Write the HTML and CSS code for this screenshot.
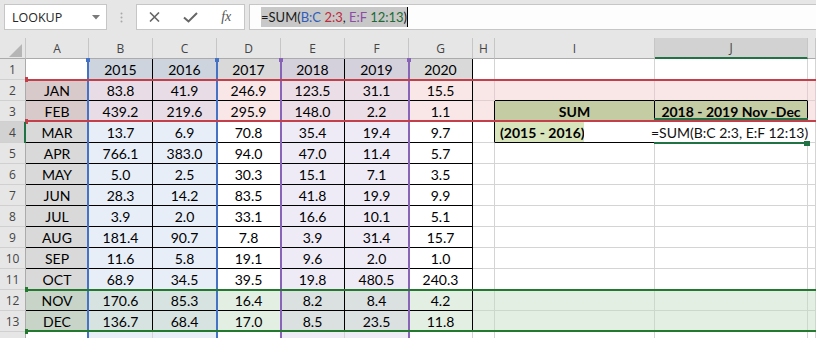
FILE: index.html
```html
<!DOCTYPE html>
<html>
<head>
<meta charset="utf-8">
<link rel="stylesheet" href="styles.css">
</head>
<body>
<div class="fbar">
  <div class="namebox"><span class="nb-text">LOOKUP</span><svg class="nb-caret" width="8" height="5" viewBox="0 0 8 5"><path d="M0 0H8L4 4.5Z" fill="#7a7a7a"/></svg></div>
  <div class="dots"><svg width="3" height="11" viewBox="0 0 3 11"><circle cx="1.5" cy="1.5" r="1" fill="#a8a8a8"/><circle cx="1.5" cy="5.5" r="1" fill="#a8a8a8"/><circle cx="1.5" cy="9.5" r="1" fill="#a8a8a8"/></svg></div>
  <div class="fbtns">
    <span class="fbtn"><svg width="11" height="10" viewBox="0 0 11 10"><path d="M1 0.5L10 9.5M10 0.5L1 9.5" stroke="#666" stroke-width="1.6" fill="none"/></svg></span>
    <span class="fbtn"><svg width="15" height="11" viewBox="0 0 15 11"><path d="M1 5.5L5.5 9.5L14 1" fill="none" stroke="#666" stroke-width="2"/></svg></span>
    <span class="fbtn fx">fx</span>
  </div>
  <div class="finput"><span class="fsel">=SUM(<span class="rb">B:C</span> <span class="rr">2:3</span>, <span class="rp">E:F</span> <span class="rg">12:13</span>)</span><span class="caret"></span></div>
</div>

<div class="sheet">
  <div class="hrow">
    <div class="corner"><svg width="25" height="20" viewBox="0 0 25 20"><path d="M22 6V19H9Z" fill="#b5b5b5"/></svg></div>
    <div>A</div><div>B</div><div>C</div><div>D</div><div>E</div><div>F</div><div>G</div><div>H</div><div>I</div><div class="jsel">J</div><div></div>
  </div>

  <div class="row r1"><div class="rh">1</div><div></div><div class="t bc">2015</div><div class="t bc">2016</div><div class="t gy">2017</div><div class="t ef">2018</div><div class="t ef">2019</div><div class="t gy">2020</div><div></div><div></div><div></div><div></div></div>

  <div class="row pink"><div class="rh">2</div><div class="t a">JAN</div><div class="t bc">83.8</div><div class="t bc">41.9</div><div class="t">246.9</div><div class="t ef">123.5</div><div class="t ef">31.1</div><div class="t">15.5</div><div></div><div class="bb"></div><div class="bb"></div><div></div></div>

  <div class="row pink"><div class="rh">3</div><div class="t a">FEB</div><div class="t bc">439.2</div><div class="t bc">219.6</div><div class="t">295.9</div><div class="t ef">148.0</div><div class="t ef">2.2</div><div class="t">1.1</div><div class="br"></div><div class="t olv b">SUM</div><div class="t olv b">2018 - 2019 Nov -Dec</div><div></div></div>

  <div class="row"><div class="rh sel">4</div><div class="t a">MAR</div><div class="t bc">13.7</div><div class="t bc">6.9</div><div class="t">70.8</div><div class="t ef">35.4</div><div class="t ef">19.4</div><div class="t">9.7</div><div class="br"></div><div class="lg bb">(2015 - 2016)</div><div></div><div></div></div>

  <div class="row"><div class="rh">5</div><div class="t a">APR</div><div class="t bc">766.1</div><div class="t bc">383.0</div><div class="t">94.0</div><div class="t ef">47.0</div><div class="t ef">11.4</div><div class="t">5.7</div><div></div><div></div><div></div><div></div></div>

  <div class="row"><div class="rh">6</div><div class="t a">MAY</div><div class="t bc">5.0</div><div class="t bc">2.5</div><div class="t">30.3</div><div class="t ef">15.1</div><div class="t ef">7.1</div><div class="t">3.5</div><div></div><div></div><div></div><div></div></div>

  <div class="row"><div class="rh">7</div><div class="t a">JUN</div><div class="t bc">28.3</div><div class="t bc">14.2</div><div class="t">83.5</div><div class="t ef">41.8</div><div class="t ef">19.9</div><div class="t">9.9</div><div></div><div></div><div></div><div></div></div>

  <div class="row"><div class="rh">8</div><div class="t a">JUL</div><div class="t bc">3.9</div><div class="t bc">2.0</div><div class="t">33.1</div><div class="t ef">16.6</div><div class="t ef">10.1</div><div class="t">5.1</div><div></div><div></div><div></div><div></div></div>

  <div class="row"><div class="rh">9</div><div class="t a">AUG</div><div class="t bc">181.4</div><div class="t bc">90.7</div><div class="t">7.8</div><div class="t ef">3.9</div><div class="t ef">31.4</div><div class="t">15.7</div><div></div><div></div><div></div><div></div></div>

  <div class="row"><div class="rh">10</div><div class="t a">SEP</div><div class="t bc">11.6</div><div class="t bc">5.8</div><div class="t">19.1</div><div class="t ef">9.6</div><div class="t ef">2.0</div><div class="t">1.0</div><div></div><div></div><div></div><div></div></div>

  <div class="row"><div class="rh">11</div><div class="t a">OCT</div><div class="t bc">68.9</div><div class="t bc">34.5</div><div class="t">39.5</div><div class="t ef">19.8</div><div class="t ef">480.5</div><div class="t">240.3</div><div></div><div></div><div></div><div></div></div>

  <div class="row green"><div class="rh">12</div><div class="t a">NOV</div><div class="t bc">170.6</div><div class="t bc">85.3</div><div class="t">16.4</div><div class="t ef">8.2</div><div class="t ef">8.4</div><div class="t">4.2</div><div></div><div></div><div></div><div></div></div>

  <div class="row green"><div class="rh">13</div><div class="t a">DEC</div><div class="t bc">136.7</div><div class="t bc">68.4</div><div class="t">17.0</div><div class="t ef">8.5</div><div class="t ef">23.5</div><div class="t">11.8</div><div></div><div></div><div></div><div></div></div>

  <div class="row"><div class="rh"></div><div></div><div class="bc"></div><div class="bc"></div><div></div><div class="ef"></div><div class="ef"></div><div></div><div></div><div></div><div></div><div></div></div>

  <div class="ov vb vb1"></div>
  <div class="ov vb vb2"></div>
  <div class="ov vp vp1"></div>
  <div class="ov vp vp2"></div>
  <div class="ov hdl hb1"></div>
  <div class="ov hdl hb2"></div>
  <div class="ov hdl hp1"></div>
  <div class="ov hdl hp2"></div>

  <div class="ov hr hr1"></div>
  <div class="ov hr hr2"></div>
  <div class="ov hg hg1"></div>
  <div class="ov hg hg2"></div>
  <div class="ov hdv hr1h"></div>
  <div class="ov hdv hr2h"></div>
  <div class="ov hdv hg1h"></div>
  <div class="ov hdv hg2h"></div>

  <div class="ov rsel"></div>
  <div class="ov edit">=SUM(B:C 2:3, E:F 12:13)</div>
  <div class="ov act actT"></div>
  <div class="ov act actB"></div>
  <div class="ov acth"></div>
</div>
</body>
</html>
```

FILE: styles.css
```css
* { box-sizing: border-box; margin: 0; padding: 0; }
html, body { width: 816px; height: 338px; overflow: hidden; }
body { background: #e6e6e6; font-family: Lato, "Liberation Sans", sans-serif; color: #000; }

/* formula bar */
.fbar { height: 38px; display: flex; align-items: flex-start; padding: 4px 0 0 4px; }
.namebox { width: 103px; height: 26px; background: #fff; border: 1px solid #c6c6c6; display: flex; align-items: center; justify-content: space-between; padding: 0 6px 0 7px; }
.nb-text { font-family: "Open Sans", sans-serif; font-size: 12.5px; color: #262626; }
.dots { width: 29px; height: 26px; display: flex; align-items: center; justify-content: center; }
.fbtns { width: 109px; height: 26px; background: #fff; border: 1px solid #c6c6c6; display: flex; }
.fbtn { flex: 1; display: flex; align-items: center; justify-content: center; }
.fx { font-family: "Liberation Serif", serif; font-style: italic; font-size: 14px; color: #555; }
.finput { margin-left: 4px; flex: 1; height: 26px; background: #fdfdfd; border: 1px solid #c6c6c6; border-right: 0; padding-left: 11px; display: flex; align-items: center; }
.fsel { background: #c8c8c8; font-size: 13px; line-height: 20px; height: 20px; color: #1a1a1a; white-space: pre; }
.caret { width: 1px; height: 20px; background: #000; }
.rb { color: #2f5dba; }
.rr { color: #c0283c; }
.rp { color: #8e4ca6; }
.rg { color: #1d6b34; }

/* sheet */
.sheet { position: relative; height: 300px; background: #fff; overflow: hidden; }
.hrow, .row { display: grid; grid-template-columns: 26px 63px 64px 64px 64px 64px 64px 64px 22px 160px 153px 1fr; height: 21px; }
.hrow > div { background: #e6e6e6; border-right: 1px solid #c6c6c6; border-bottom: 1px solid #ababab; display: flex; align-items: center; justify-content: center; font-family: "Open Sans", sans-serif; font-size: 12px; color: #444; }
.hrow > .corner { display: block; }
.corner svg { display: block; }
.hrow > .jsel { background: #d2d2d2; border-bottom: 2px solid #217346; }

.row > div { background: #fff; border-right: 1px solid #d4d4d4; border-bottom: 1px solid #d4d4d4; display: flex; align-items: center; justify-content: center; font-size: 14px; white-space: nowrap; overflow: hidden; padding-top: 1px; }
.row > .rh { background: #e6e6e6; border-right-color: #ababab; border-bottom-color: #d0d0d0; font-family: "Open Sans", sans-serif; font-size: 12px; color: #444; padding-top: 0; }
.row > .rh.sel { background: #d2d2d2; }

.row > .a { background: #d9d9d9; }
.row > .bc { background: #e7eef8; }
.row > .ef { background: #efebf6; }
.r1 > .bc { background: #cdd4de; }
.r1 > .ef { background: #d4d0dc; }
.r1 > .gy { background: #d9d9d9; }

.pink > div { background: #f9e7e8; border-color: #dfcfd0; }
.pink > .a { background: #d8c9ca; }
.pink > .bc { background: #e8dde6; }
.pink > .ef { background: #ecdee7; }

.green > div { background: #e3efe3; border-color: #cbd8cb; }
.green > .a { background: #c8d4c8; }
.green > .bc { background: #d7e3e1; }
.green > .ef { background: #dbe1e1; }

.row > .t { border-color: #000; }
.row > .br { border-right-color: #000; }
.row > .bb { border-bottom-color: #000; }
.row > .olv { background: #c4cca4; }
.row > .lg { background: #d8e4bc; justify-content: flex-start; padding-left: 5px; font-weight: 700; }
.b { font-weight: 700; }

/* range overlays */
.ov { position: absolute; }
.vb, .vp { top: 21px; bottom: 0; width: 2px; }
.vb { background: #4472c4; }
.vp { background: #8764b8; }
.vb1 { left: 87px; }
.vb2 { left: 216px; }
.vp1 { left: 280px; }
.vp2 { left: 408px; }
.hdl { top: 20px; width: 4px; height: 4px; }
.hb1 { left: 86px; background: #4472c4; }
.hb2 { left: 215px; background: #4472c4; }
.hp1 { left: 279px; background: #8764b8; }
.hp2 { left: 407px; background: #8764b8; }

.hr, .hg { left: 25px; right: 0; height: 2px; }
.hr { background: #c3404b; }
.hg { background: #237a2f; }
.hr1 { top: 41px; }
.hr2 { top: 82px; }
.hg1 { top: 251px; }
.hg2 { top: 292px; }
.hdv { left: 25px; width: 3px; height: 5px; }
.hr1h { top: 39px; background: #c3404b; }
.hr2h { top: 81px; background: #c3404b; }
.hg1h { top: 249px; background: #237a2f; }
.hg2h { top: 291px; background: #237a2f; }

.rsel { left: 24px; top: 84px; width: 2px; height: 21px; background: #217346; }
.edit { left: 584px; top: 84px; width: 224px; height: 20px; background: #fff; display: flex; align-items: center; padding-left: 67px; font-size: 14px; color: #111; white-space: pre; }
.act { left: 654px; width: 154px; height: 2px; background: #217346; }
.actT { top: 80px; }
.actB { top: 104px; }
.acth { left: 804px; top: 103px; width: 6px; height: 5px; background: #217346; }
```
